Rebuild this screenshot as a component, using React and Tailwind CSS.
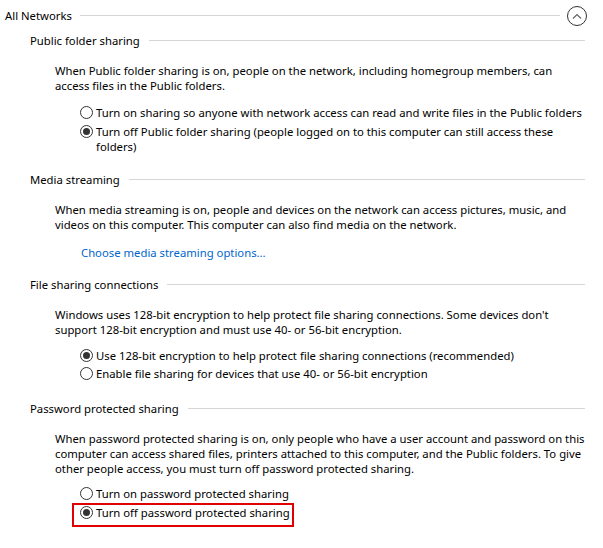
import React from 'react'

const Radio = ({ checked }) => (
  <span className="mt-[1px] flex h-[13px] w-[13px] shrink-0 items-center justify-center rounded-full border border-[#333] bg-white">
    {checked && <span className="h-[7px] w-[7px] rounded-full bg-[#333]" />}
  </span>
)

const Option = ({ checked, children, className = '' }) => (
  <div className={`flex items-start gap-[3px] pl-[80px] ${className}`}>
    <Radio checked={checked} />
    <div className="whitespace-nowrap">{children}</div>
  </div>
)

const Heading = ({ children, className = '' }) => (
  <div className={`flex items-center gap-[9px] pl-[30px] pr-[18px] ${className}`}>
    <span className="whitespace-nowrap">{children}</span>
    <span className="h-px flex-1 bg-[#d6d6d6]" />
  </div>
)

const Body = ({ children, className = '' }) => (
  <div className={`whitespace-nowrap pl-[55px] ${className}`}>{children}</div>
)

export default function App() {
  return (
    <div className="h-[548px] w-[603px] overflow-hidden bg-white pt-[5px] text-[11.3px] leading-[15px] text-black [font-family:'Noto_Sans',sans-serif]">
      {/* ALL NETWORKS */}
      <div className="flex h-[20px] items-center pl-[5px] pr-[16px]">
        <span className="whitespace-nowrap">All Networks</span>
        <span className="ml-[8px] h-px flex-1 bg-[#d6d6d6]" />
        <span className="ml-[7px] mt-[2px] flex h-[20px] w-[20px] items-center justify-center rounded-full border border-[#333]">
          <svg width="10" height="6" viewBox="0 0 10 6" fill="none">
            <path d="M1 5.5L5 1.5L9 5.5" stroke="#666" strokeWidth="1.2" />
          </svg>
        </span>
      </div>

      {/* PUBLIC FOLDER SHARING */}
      <Heading className="mt-[8px]">Public folder sharing</Heading>
      <Body className="mt-[15px]">
        When Public folder sharing is on, people on the network, including homegroup members, can<br />
        access files in the Public folders.
      </Body>
      <Option className="mt-[12px]">Turn on sharing so anyone with network access can read and write files in the Public folders</Option>
      <Option checked className="mt-[4px]">
        Turn off Public folder sharing (people logged on to this computer can still access these<br />
        folders)
      </Option>

      {/* MEDIA STREAMING */}
      <Heading className="mt-[18px]">Media streaming</Heading>
      <Body className="mt-[15px]">
        When media streaming is on, people and devices on the network can access pictures, music, and<br />
        videos on this computer. This computer can also find media on the network.
      </Body>
      <div className="mt-[13px] pl-[81px]">
        <a href="#" className="text-[#0066cc]">Choose media streaming options...</a>
      </div>

      {/* FILE SHARING CONNECTIONS */}
      <Heading className="mt-[17px]">File sharing connections</Heading>
      <Body className="mt-[15px]">
        Windows uses 128-bit encryption to help protect file sharing connections. Some devices don't<br />
        support 128-bit encryption and must use 40- or 56-bit encryption.
      </Body>
      <Option checked className="mt-[11px]">Use 128-bit encryption to help protect file sharing connections (recommended)</Option>
      <Option className="mt-[3px]">Enable file sharing for devices that use 40- or 56-bit encryption</Option>

      {/* PASSWORD PROTECTED SHARING */}
      <Heading className="mt-[20px]">Password protected sharing</Heading>
      <Body className="mt-[15px]">
        When password protected sharing is on, only people who have a user account and password on this<br />
        computer can access shared files, printers attached to this computer, and the Public folders. To give<br />
        other people access, you must turn off password protected sharing.
      </Body>
      <Option className="mt-[10px]">Turn on password protected sharing</Option>
      <div className="relative mt-[4px] w-fit">
        <Option checked>Turn off password protected sharing</Option>
        <div className="pointer-events-none absolute -bottom-[7px] -right-[4px] -top-[2px] left-[72px] border-2 border-[#e00000]" />
      </div>
    </div>
  )
}
